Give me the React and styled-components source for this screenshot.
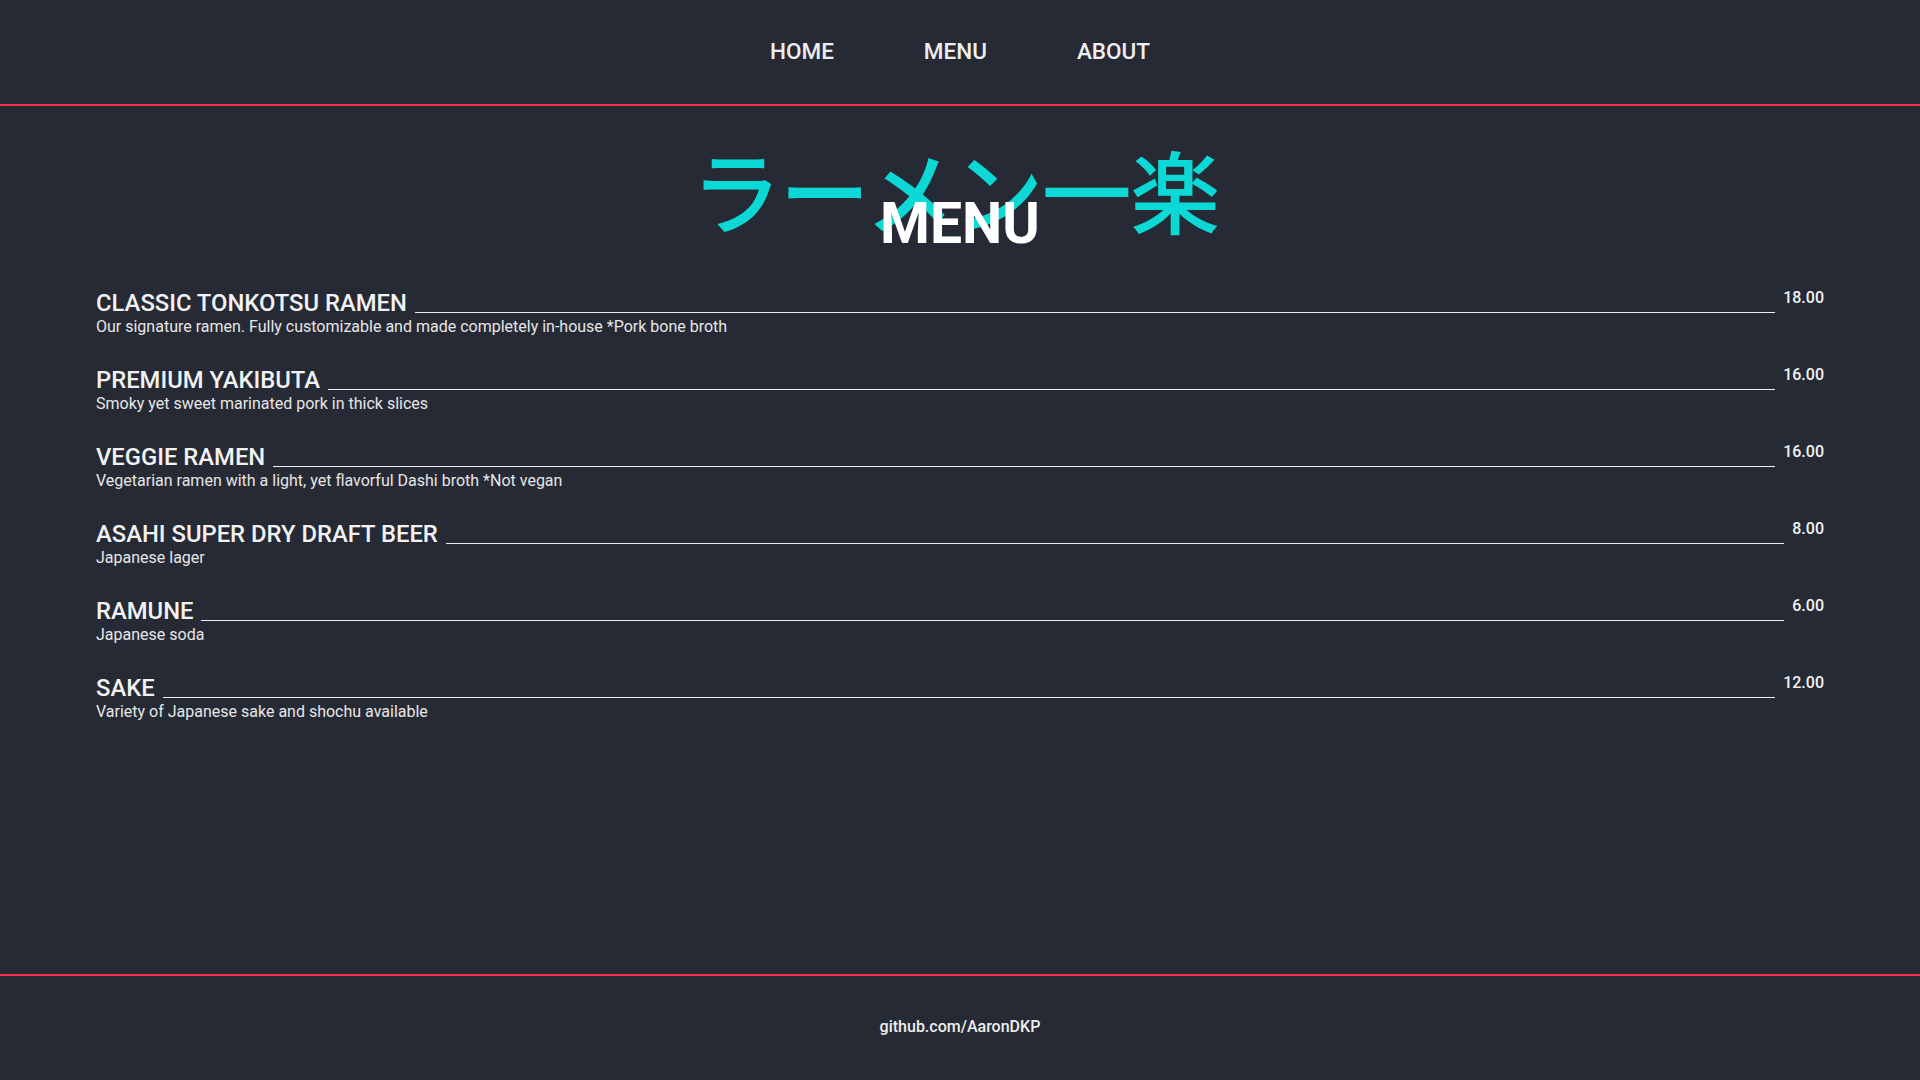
import styled, { createGlobalStyle } from "styled-components";

const items = [
  {
    name: "CLASSIC TONKOTSU RAMEN",
    desc: "Our signature ramen. Fully customizable and made completely in-house *Pork bone broth",
    price: "18.00",
  },
  {
    name: "PREMIUM YAKIBUTA",
    desc: "Smoky yet sweet marinated pork in thick slices",
    price: "16.00",
  },
  {
    name: "VEGGIE RAMEN",
    desc: "Vegetarian ramen with a light, yet flavorful Dashi broth *Not vegan",
    price: "16.00",
  },
  { name: "ASAHI SUPER DRY DRAFT BEER", desc: "Japanese lager", price: "8.00" },
  { name: "RAMUNE", desc: "Japanese soda", price: "6.00" },
  {
    name: "SAKE",
    desc: "Variety of Japanese sake and shochu available",
    price: "12.00",
  },
];

export default function App() {
  return (
    <>
      <GlobalStyle />
      <StyledPage>
        <StyledHeader>
          <StyledNav>
            <StyledNavLink href="#">HOME</StyledNavLink>
            <StyledNavLink href="#">MENU</StyledNavLink>
            <StyledNavLink href="#">ABOUT</StyledNavLink>
          </StyledNav>
        </StyledHeader>

        <StyledMain>
          <StyledTitleWrap>
            <StyledJapanese lang="ja">ラーメン一楽</StyledJapanese>
            <StyledTitle>MENU</StyledTitle>
          </StyledTitleWrap>

          <StyledList>
            {items.map((item) => (
              <StyledItem key={item.name}>
                <StyledItemRow>
                  <StyledItemName>{item.name}</StyledItemName>
                  <StyledLeader />
                  <StyledPrice>{item.price}</StyledPrice>
                </StyledItemRow>
                <StyledDesc>{item.desc}</StyledDesc>
              </StyledItem>
            ))}
          </StyledList>
        </StyledMain>

        <StyledFooter>
          <StyledFooterLink href="#">github.com/AaronDKP</StyledFooterLink>
        </StyledFooter>
      </StyledPage>
    </>
  );
}

const GlobalStyle = createGlobalStyle`
  * {
    box-sizing: border-box;
  }

  body {
    margin: 0;
    background-color: #262a35;
    color: #f0f0f0;
    font-family: Roboto, "Noto Sans", sans-serif;
  }
`;

const StyledPage = styled.div`
  min-height: 100vh;
  display: flex;
  flex-direction: column;
`;

const StyledHeader = styled.header`
  height: 106px;
  border-bottom: 2px solid #fe2c55;
  display: flex;
  align-items: center;
  justify-content: center;
`;

const StyledNav = styled.nav`
  display: flex;
  gap: 90px;
  margin-top: -2px;
`;

const StyledNavLink = styled.a`
  color: #eeeeee;
  text-decoration: none;
  font-size: 22.5px;
  font-weight: 500;
`;

const StyledMain = styled.main`
  flex: 1;
  padding: 0 96px;
`;

const StyledTitleWrap = styled.div`
  position: relative;
  text-align: center;
  padding-top: 22px;
  height: 183px;
`;

const StyledJapanese = styled.h1`
  margin: 0;
  padding-right: 10px;
  font-family: "Noto Sans CJK JP", sans-serif;
  font-weight: 500;
  font-size: 90px;
  line-height: 120px;
  letter-spacing: -1.5px;
  color: #0cd9d6;
`;

const StyledTitle = styled.h2`
  position: absolute;
  left: 0;
  right: 0;
  top: 83px;
  margin: 0;
  font-size: 57px;
  font-weight: 700;
  line-height: 70px;
  color: #ffffff;
`;

const StyledList = styled.ul`
  list-style: none;
  margin: 0;
  padding: 0;
`;

const StyledItem = styled.li`
  margin-bottom: 29px;
`;

const StyledItemRow = styled.div`
  display: flex;
  align-items: flex-start;
`;

const StyledItemName = styled.h3`
  margin: 0 8px 0 0;
  font-size: 23.8px;
  font-weight: 500;
  line-height: 28px;
  color: #f2f2f2;
  white-space: nowrap;
`;

const StyledLeader = styled.span`
  flex: 1;
  height: 24px;
  border-bottom: 1px solid #eeeeee;
`;

const StyledPrice = styled.span`
  margin-left: 8px;
  margin-top: 1px;
  font-size: 16px;
  font-weight: 500;
  line-height: 16px;
  color: #f2f2f2;
`;

const StyledDesc = styled.p`
  margin: 0;
  font-size: 16px;
  line-height: 20px;
  color: #e6e6e6;
`;

const StyledFooter = styled.footer`
  height: 106px;
  border-top: 2px solid #fe2c55;
  display: flex;
  align-items: center;
  justify-content: center;
  padding-bottom: 4px;
`;

const StyledFooterLink = styled.a`
  color: #eeeeee;
  text-decoration: none;
  font-size: 16px;
  font-weight: 500;
`;
